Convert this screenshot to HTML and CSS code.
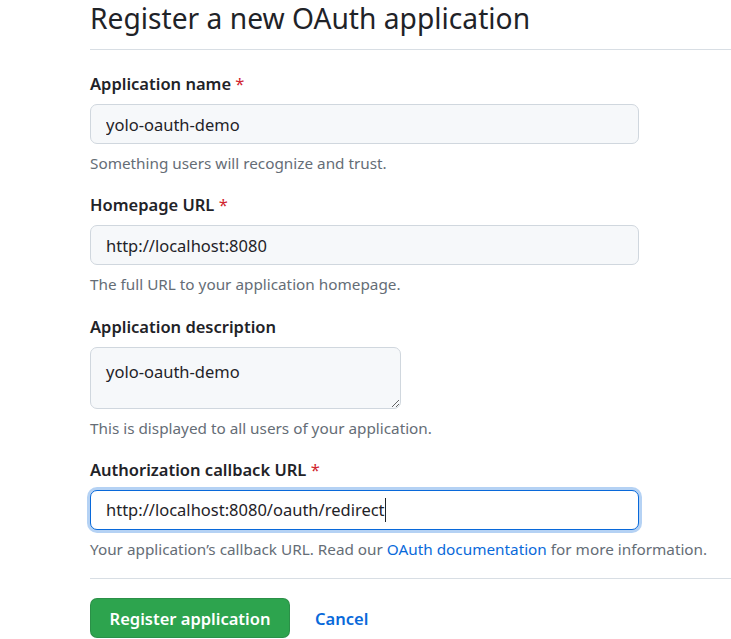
FILE: index.html
```html
<!DOCTYPE html>
<html lang="en">
<head>
<meta charset="utf-8">
<title>Register a new OAuth application</title>
<link rel="stylesheet" href="styles.css">
</head>
<body>
<main class="page">
  <div class="subhead">
    <h2 class="subhead-heading">Register a new OAuth application</h2>
  </div>
  <form class="oauth-form">
    <div class="form-group">
      <label class="form-label">Application name <span class="req">*</span></label>
      <input class="form-control wide" type="text" value="yolo-oauth-demo">
      <p class="note">Something users will recognize and trust.</p>
    </div>
    <div class="form-group">
      <label class="form-label">Homepage URL <span class="req">*</span></label>
      <input class="form-control wide" type="text" value="http://localhost:8080">
      <p class="note">The full URL to your application homepage.</p>
    </div>
    <div class="form-group group-tall">
      <label class="form-label">Application description</label>
      <textarea class="form-control textarea">yolo-oauth-demo</textarea>
      <p class="note">This is displayed to all users of your application.</p>
    </div>
    <div class="form-group">
      <label class="form-label">Authorization callback URL <span class="req">*</span></label>
      <div class="form-control wide focused"><span class="value">http://localhost:8080/oauth/redirect</span><span class="caret"></span></div>
      <p class="note">Your application’s callback URL. Read our <a class="link" href="#">OAuth documentation</a> for more information.</p>
    </div>
    <hr class="divider">
    <div class="actions">
      <button class="btn-primary" type="button">Register application</button>
      <a class="btn-link" href="#">Cancel</a>
    </div>
  </form>
</main>
</body>
</html>
```
FILE: styles.css
```css
html, body {
  margin: 0;
  padding: 0;
  background: #ffffff;
}
body {
  font-family: "Noto Sans", "Open Sans", sans-serif;
  color: #1f2328;
  overflow: hidden;
}
.page {
  padding-left: 90px;
}
.subhead {
  border-bottom: 1px solid #d8dee4;
  padding-bottom: 13px;
  margin-bottom: 23px;
}
.subhead-heading {
  margin: 0;
  font-size: 28.2px;
  font-weight: 400;
  line-height: 36px;
  color: #1f2328;
}
.oauth-form {
  margin: 0;
}
.form-group {
  margin-bottom: 20px;
}
.form-group.group-tall {
  margin-top: 21px;
  margin-bottom: 20px;
}
.form-label {
  display: block;
  font-size: 16.5px;
  font-weight: 600;
  line-height: 22px;
  margin-bottom: 9px;
}
.req {
  color: #d1242f;
  font-weight: 400;
}
.form-control {
  display: block;
  box-sizing: border-box;
  height: 40px;
  margin: 0;
  padding: 0 15px;
  font-family: inherit;
  font-size: 16.5px;
  line-height: 38px;
  color: #1f2328;
  background: #f6f8fa;
  border: 1px solid #d0d7de;
  border-radius: 7px;
  outline: none;
}
.wide {
  width: 549px;
}
.textarea {
  width: 311px;
  height: 62px;
  padding: 12px 15px 8px;
  line-height: 24px;
  resize: vertical;
  overflow: hidden;
}
.focused {
  background: #ffffff;
  border-color: #0969da;
  box-shadow: 0 0 0 3px rgba(9, 105, 218, 0.3);
  display: flex;
  align-items: center;
}
.caret {
  display: inline-block;
  width: 1px;
  height: 24px;
  background: #1f2328;
}
.note {
  margin: 8px 0 0;
  font-size: 15.3px;
  line-height: 22px;
  color: #656d76;
}
.link {
  color: #0969da;
  text-decoration: none;
}
.divider {
  margin: -2px 0 19px;
  border: 0;
  border-top: 1px solid #d8dee4;
  height: 0;
}
.actions {
  display: flex;
  align-items: center;
  gap: 25px;
}
.btn-primary {
  box-sizing: border-box;
  width: 200px;
  height: 40px;
  font-family: inherit;
  font-size: 16.5px;
  font-weight: 600;
  color: #ffffff;
  background: #2da44e;
  border: 1px solid rgba(31, 35, 40, 0.15);
  border-radius: 7px;
  padding: 0;
}
.btn-link {
  font-size: 16.5px;
  font-weight: 600;
  color: #0969da;
  text-decoration: none;
}
```
